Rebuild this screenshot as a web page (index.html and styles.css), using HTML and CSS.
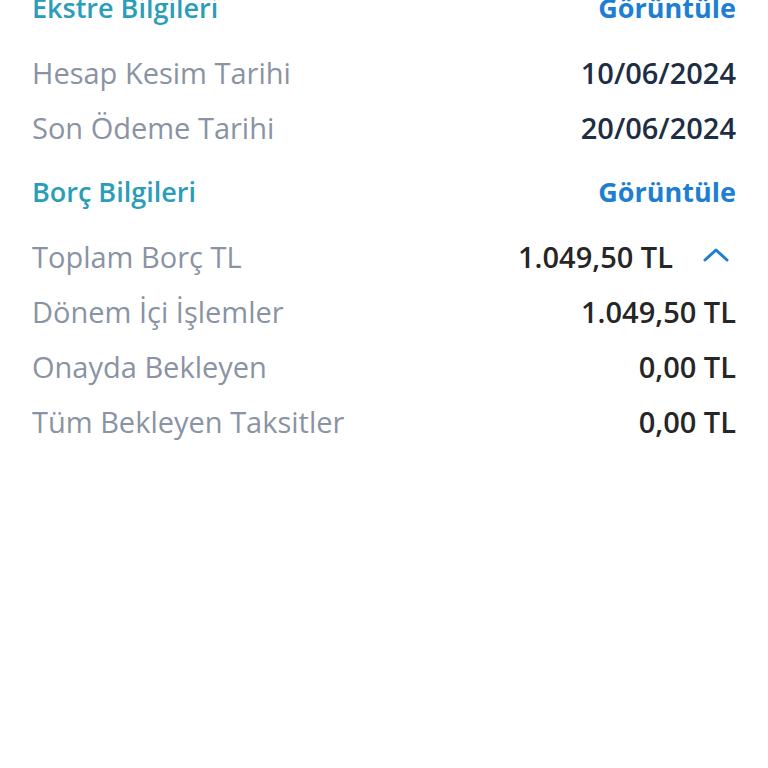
FILE: index.html
```html
<!DOCTYPE html>
<html lang="tr">
<head>
    <meta charset="UTF-8">
    <meta name="viewport" content="width=device-width, initial-scale=1.0">
    <title>Kart Bilgileri</title>
    <link rel="stylesheet" href="styles.css">
</head>
<body>
    <div class="card-info">
        <div class="section">
            <div class="section-head">
                <span class="section-title">Ekstre Bilgileri</span>
                <a class="section-link" href="#">Görüntüle</a>
            </div>
            <div class="row">
                <span class="label">Hesap Kesim Tarihi</span>
                <span class="value date">10/06/2024</span>
            </div>
            <div class="row">
                <span class="label">Son Ödeme Tarihi</span>
                <span class="value date">20/06/2024</span>
            </div>
        </div>
        <div class="section">
            <div class="section-head">
                <span class="section-title">Borç Bilgileri</span>
                <a class="section-link" href="#">Görüntüle</a>
            </div>
            <div class="row">
                <span class="label">Toplam Borç TL</span>
                <span class="value">1.049,50 TL
                    <span class="toggle">
                        <svg width="26" height="14" viewBox="0 0 26 14"><path d="M2 12 L13 2 L24 12" fill="none" stroke="#1e7fd2" stroke-width="3" stroke-linecap="round" stroke-linejoin="round"/></svg>
                    </span>
                </span>
            </div>
            <div class="row">
                <span class="label">Dönem İçi İşlemler</span>
                <span class="value">1.049,50 TL</span>
            </div>
            <div class="row">
                <span class="label">Onayda Bekleyen</span>
                <span class="value">0,00 TL</span>
            </div>
            <div class="row">
                <span class="label">Tüm Bekleyen Taksitler</span>
                <span class="value">0,00 TL</span>
            </div>
        </div>
    </div>
</body>
</html>
```

FILE: styles.css
```css
body {
    font-family: 'Open Sans', sans-serif;
    margin: 0;
    padding: 0;
    background-color: #ffffff;
}
.card-info {
    margin-top: -20px;
    padding: 0 32px;
    display: flex;
    flex-direction: column;
    gap: 9px;
}
.section-head {
    display: flex;
    justify-content: space-between;
    align-items: center;
    height: 55px;
    margin-bottom: 10px;
}
.section-title {
    font-size: 27px;
    font-weight: 600;
    color: #2a9db8;
}
.section-link {
    font-size: 27px;
    font-weight: 700;
    color: #1e7fd2;
    text-decoration: none;
}
.row {
    display: flex;
    justify-content: space-between;
    align-items: center;
    height: 55px;
}
.label {
    font-size: 29px;
    color: #8a93a3;
}
.value {
    font-size: 29px;
    font-weight: 600;
    color: #262626;
    display: flex;
    align-items: center;
}
.value.date {
    color: #1d2d44;
}
.toggle {
    width: 40px;
    height: 24px;
    margin-left: 23px;
    margin-top: -4px;
    display: flex;
    align-items: center;
    justify-content: center;
}
```
